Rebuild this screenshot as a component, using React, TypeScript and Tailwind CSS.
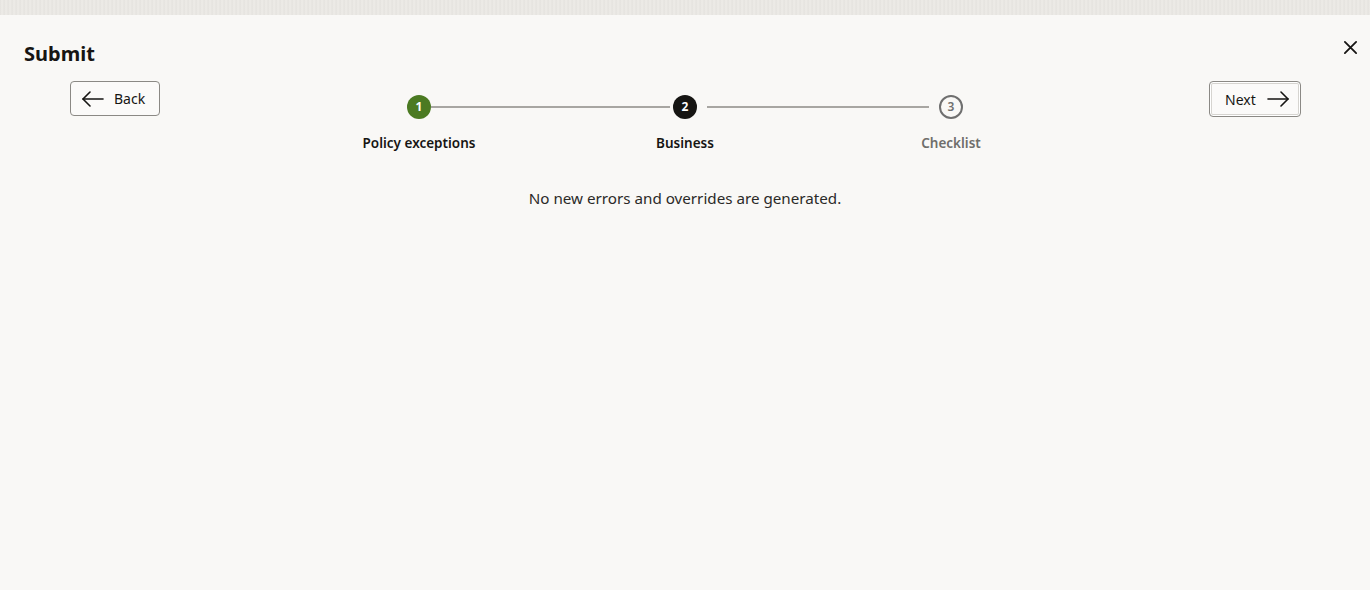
import React from 'react';

const steps = [
  { n: 1, label: 'Policy exceptions', state: 'done' },
  { n: 2, label: 'Business', state: 'current' },
  { n: 3, label: 'Checklist', state: 'todo' },
];

function ArrowLeft() {
  return (
    <svg width="24" height="16" viewBox="0 0 24 16" fill="none" stroke="#161513" strokeWidth="1.6" strokeLinecap="round" strokeLinejoin="round">
      <path d="M22 8H2" />
      <path d="M9 1L2 8l7 7" />
    </svg>
  );
}

function ArrowRight() {
  return (
    <svg width="24" height="16" viewBox="0 0 24 16" fill="none" stroke="#161513" strokeWidth="1.6" strokeLinecap="round" strokeLinejoin="round">
      <path d="M2 8h20" />
      <path d="M15 1l7 7-7 7" />
    </svg>
  );
}

function StepCircle({ n, state }: { n: number; state: string }) {
  if (state === 'done')
    return <div className="w-6 h-6 rounded-full bg-[#4b7a22] text-white text-[12px] font-bold flex items-center justify-center">{n}</div>;
  if (state === 'current')
    return <div className="w-6 h-6 rounded-full bg-[#161513] text-white text-[12px] font-bold flex items-center justify-center">{n}</div>;
  return <div className="w-6 h-6 rounded-full border-2 border-[#6f6f6f] text-[#6f6f6f] text-[12px] font-semibold flex items-center justify-center">{n}</div>;
}

export default function App() {
  return (
    <div className="w-[1370px] h-[590px] bg-[#f9f8f6] text-[#161513] overflow-hidden" style={{ fontFamily: '"Noto Sans", "Open Sans", sans-serif' }}>
      <div className="h-[15px] bg-[#e9e7e3] bg-[repeating-linear-gradient(90deg,#e4e2de_0px,#eeece8_2px,#e6e4e0_4px)]" />

      <div className="flex items-start justify-between pl-6 pr-[11px] pt-[25px]">
        <h1 className="text-[20px] font-bold leading-7">Submit</h1>
        <button className="mt-[-1px] p-[1px]">
          <svg width="15" height="15" viewBox="0 0 16 16" fill="none" stroke="#161513" strokeWidth="1.9" strokeLinecap="round">
            <path d="M2 2l12 12M14 2L2 14" />
          </svg>
        </button>
      </div>

      <div className="relative flex items-start justify-between pl-[70px] pr-[69px] mt-[13px]">
        <button className="h-[35px] w-[90px] border border-[#8b8985] rounded-[4px] bg-[#fbfaf9] flex items-center gap-[9px] pl-[10px] text-[14px]">
          <ArrowLeft />
          <span>Back</span>
        </button>

        <div className="absolute left-[286px] top-[14px] w-[798px]">
          <div className="flex items-center justify-center">
            <StepCircle n={1} state="done" />
            <div className="w-[239px] h-[2px] bg-[#a8a6a2] mr-[3px]" />
            <StepCircle n={2} state="current" />
            <div className="w-[222px] h-[2px] bg-[#a8a6a2] mx-[10px]" />
            <StepCircle n={3} state="todo" />
          </div>
          <div className="grid grid-cols-3 mt-[14px]">
            {steps.map((s) => (
              <div key={s.n} className={`text-center text-[13.5px] font-semibold leading-5 ${s.state === 'todo' ? 'text-[#6f6e6b]' : 'text-[#161513]'}`}>
                {s.label}
              </div>
            ))}
          </div>
        </div>

        <button className="h-[36px] w-[92px] border border-[#8b8985] rounded-[4px] bg-[#fbfaf9] shadow-[inset_0_0_0_1px_#ffffff,inset_0_0_0_2px_#d6d4d0] flex items-center gap-[10px] pl-[15px] text-[14px]">
          <span>Next</span>
          <ArrowRight />
        </button>
      </div>

      <p className="text-center text-[15.2px] leading-6 mt-[69px] text-[#2b2a28]">No new errors and overrides are generated.</p>
    </div>
  );
}
